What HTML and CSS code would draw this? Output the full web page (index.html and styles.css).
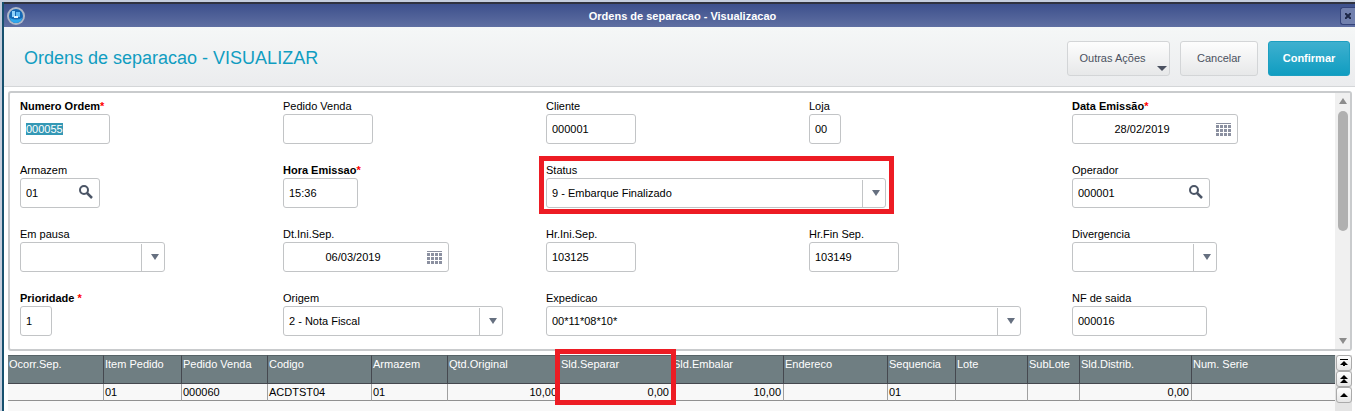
FILE: index.html
```
<!DOCTYPE html>
<html lang="pt-BR">
<head>
    <meta charset="UTF-8">
    <title>Ordens de separacao - Visualizacao</title>
    <link rel="stylesheet" href="styles.css">
</head>
<body>
    <!-- shared icons -->
    <svg class="sprite" aria-hidden="true">
        <symbol id="lupa" viewBox="0 0 14 14">
            <circle cx="5" cy="5" r="4" fill="none" stroke="#4b5566" stroke-width="2"/>
            <path d="M8 8l5 5" stroke="#4b5566" stroke-width="2.5"/>
        </symbol>
        <symbol id="calendario" viewBox="0 0 15 13">
            <path d="M0 .5h15" stroke="#8b90a0" stroke-width="1"/>
            <path d="M0 3.5h15M0 7.5h15M0 11.5h15" stroke="#8b90a0" stroke-width="3" stroke-dasharray="3 1"/>
        </symbol>
        <symbol id="seta" viewBox="0 0 8 6">
            <path d="M0 0h8L4 6z" fill="#667080"/>
        </symbol>
    </svg>

    <div class="window">
        <div class="titlebar">
            <svg class="logo" viewBox="0 0 18 18">
                <circle cx="9" cy="9" r="9" fill="#aeb8c8"/>
                <circle cx="9" cy="9" r="7" fill="#1468b4"/>
                <path d="M3 11a6 5 0 0 0 12 0a9 6 0 0 1-12 0z" fill="#30a8ec"/>
                <path d="M5 4h3v6H5z" fill="#8fd2fa"/>
                <path d="M9 5h4v5H9z" fill="#5db8f3"/>
                <path d="M7 9h4v2H7z" fill="#e6f6ff"/>
            </svg>
            <span class="caption">Ordens de separacao - Visualizacao</span>
            <button type="button" class="close" aria-label="Fechar">
                <svg width="6" height="6" viewBox="0 0 6 6"><path d="M0 0l6 6M6 0L0 6" stroke="#1d2748" stroke-width="2"/></svg>
            </button>
        </div>

        <div class="header">
            <h1>Ordens de separacao - VISUALIZAR</h1>
            <button type="button" class="btn btn-menu">Outras Ações
                <svg width="10" height="5" viewBox="0 0 10 5"><path d="M0 0h10L5 5z" fill="#4b5160"/></svg>
            </button>
            <button type="button" class="btn btn-cancel">Cancelar</button>
            <button type="button" class="btn btn-primary">Confirmar</button>
        </div>

        <div class="panel">
            <form class="fields">
                <div class="field required">
                    <label for="numero">Numero Ordem<i>*</i></label>
                    <input type="text" id="numero" class="w90" value="000055">
                </div>
                <div class="field">
                    <label for="pedido">Pedido Venda</label>
                    <input type="text" id="pedido" class="w90">
                </div>
                <div class="field">
                    <label for="cliente">Cliente</label>
                    <input type="text" id="cliente" class="w90" value="000001">
                </div>
                <div class="field">
                    <label for="loja">Loja</label>
                    <input type="text" id="loja" class="w32" value="00">
                </div>
                <div class="field required">
                    <label for="emissao">Data Emissão<i>*</i></label>
                    <div class="control date">
                        <input type="text" id="emissao" value="28/02/2019">
                        <svg><use href="#calendario"/></svg>
                    </div>
                </div>

                <div class="field">
                    <label for="armazem">Armazem</label>
                    <div class="control search w80">
                        <input type="text" id="armazem" value="01">
                        <svg><use href="#lupa"/></svg>
                    </div>
                </div>
                <div class="field required">
                    <label for="hora">Hora Emissao<i>*</i></label>
                    <input type="text" id="hora" class="w75" value="15:36">
                </div>
                <div class="field wide marked">
                    <label for="status">Status</label>
                    <div class="control combo w340">
                        <select id="status"><option>9 - Embarque Finalizado</option></select>
                        <svg><use href="#seta"/></svg>
                    </div>
                </div>
                <div class="field">
                    <label for="operador">Operador</label>
                    <div class="control search w138">
                        <input type="text" id="operador" value="000001">
                        <svg><use href="#lupa"/></svg>
                    </div>
                </div>

                <div class="field">
                    <label for="pausa">Em pausa</label>
                    <div class="control combo w145">
                        <select id="pausa"><option></option></select>
                        <svg><use href="#seta"/></svg>
                    </div>
                </div>
                <div class="field">
                    <label for="dtini">Dt.Ini.Sep.</label>
                    <div class="control date">
                        <input type="text" id="dtini" value="06/03/2019">
                        <svg><use href="#calendario"/></svg>
                    </div>
                </div>
                <div class="field">
                    <label for="hrini">Hr.Ini.Sep.</label>
                    <input type="text" id="hrini" class="w90" value="103125">
                </div>
                <div class="field">
                    <label for="hrfin">Hr.Fin Sep.</label>
                    <input type="text" id="hrfin" class="w90" value="103149">
                </div>
                <div class="field">
                    <label for="diverg">Divergencia</label>
                    <div class="control combo w145">
                        <select id="diverg"><option></option></select>
                        <svg><use href="#seta"/></svg>
                    </div>
                </div>

                <div class="field required">
                    <label for="prioridade">Prioridade <i>*</i></label>
                    <input type="text" id="prioridade" class="w32" value="1">
                </div>
                <div class="field">
                    <label for="origem">Origem</label>
                    <div class="control combo w220">
                        <select id="origem"><option>2 - Nota Fiscal</option></select>
                        <svg><use href="#seta"/></svg>
                    </div>
                </div>
                <div class="field wide">
                    <label for="expedicao">Expedicao</label>
                    <div class="control combo w475">
                        <select id="expedicao"><option>00*11*08*10*</option></select>
                        <svg><use href="#seta"/></svg>
                    </div>
                </div>
                <div class="field">
                    <label for="nf">NF de saida</label>
                    <input type="text" id="nf" class="w135" value="000016">
                </div>
            </form>
            <div class="scrollbar">
                <svg width="8" height="6" viewBox="0 0 8 6"><path d="M0 6h8L4 0z" fill="#8c8c8c"/></svg>
                <div class="thumb"></div>
                <svg width="8" height="6" viewBox="0 0 8 6"><path d="M0 0h8L4 6z" fill="#8c8c8c"/></svg>
            </div>
        </div>

        <div class="items">
            <table>
                <colgroup>
                    <col class="c96"><col class="c78"><col class="c86"><col class="c104"><col class="c76">
                    <col class="c112"><col class="c112"><col class="c112"><col class="c104"><col class="c68">
                    <col class="c72"><col class="c52"><col class="c112"><col>
                </colgroup>
                <thead>
                    <tr>
                        <th>Ocorr.Sep.</th>
                        <th>Item Pedido</th>
                        <th>Pedido Venda</th>
                        <th>Codigo</th>
                        <th>Armazem</th>
                        <th>Qtd.Original</th>
                        <th class="marked-col">Sld.Separar</th>
                        <th>Sld.Embalar</th>
                        <th>Endereco</th>
                        <th>Sequencia</th>
                        <th>Lote</th>
                        <th>SubLote</th>
                        <th>Sld.Distrib.</th>
                        <th>Num. Serie</th>
                    </tr>
                </thead>
                <tbody>
                    <tr>
                        <td></td>
                        <td>01</td>
                        <td>000060</td>
                        <td>ACDTST04</td>
                        <td>01</td>
                        <td class="num">10,00</td>
                        <td class="num">0,00</td>
                        <td class="num">10,00</td>
                        <td></td>
                        <td>01</td>
                        <td></td>
                        <td></td>
                        <td class="num">0,00</td>
                        <td></td>
                    </tr>
                </tbody>
            </table>
            <div class="nav">
                <button type="button" aria-label="Primeiro"><svg viewBox="0 0 8 8"><path d="M0 0h8v1H0zM4 2l4 4H0zM3 6h2v1H3z"/></svg></button>
                <button type="button" aria-label="Pagina anterior"><svg viewBox="0 0 8 8"><path d="M4 0l4 4H0zM4 4l4 4H0z"/></svg></button>
                <button type="button" aria-label="Anterior"><svg viewBox="0 0 8 8"><path d="M4 2l4 4H0z"/></svg></button>
            </div>
        </div>
    </div>

    <script>
        const numero = document.getElementById('numero');
        numero.focus();
        numero.select();
    </script>
</body>
</html>
```
FILE: styles.css
```
*, *::before, *::after {
    box-sizing: border-box;
}
html {
    background: #fff;
}
body {
    margin: 0;
    padding: 2px 0 0 2px;
    background: #c5cedd;
    font-family: "Liberation Sans", Arial, sans-serif;
    font-size: 11px;
    color: #000;
}
input, select, button {
    font-family: inherit;
    font-size: 11px;
    color: #000;
    margin: 0;
}
.sprite {
    display: none;
}
.window {
    border-left: 2px solid #16506e;
    background: #fff;
}

/* title bar */
.titlebar {
    display: flex;
    align-items: center;
    height: 25px;
    border-top: 2px solid #30333f;
    background: linear-gradient(#3d508c, #5f6fa2);
    color: #fff;
    font-weight: bold;
}
.logo {
    width: 18px;
    height: 18px;
    margin-left: 3px;
}
.caption {
    flex: 1;
    text-align: center;
}
.close {
    display: flex;
    align-items: center;
    justify-content: center;
    width: 15px;
    height: 18px;
    padding: 0;
    border: 1px solid #34437a;
    border-right: none;
    border-radius: 3px 0 0 3px;
    background: #7180ae;
}

/* header */
.header {
    display: flex;
    align-items: center;
    gap: 10px;
    height: 60px;
    padding: 3px 5px 0 20px;
    border-bottom: 1px solid #d4d6d8;
    background: linear-gradient(#f5f7f7, #ebecee);
}
h1 {
    flex: 1;
    margin: 0;
    font-size: 18px;
    font-weight: normal;
    color: #109dc1;
}
.btn {
    height: 35px;
    padding: 0;
    border: 1px solid #d3d5d7;
    border-radius: 3px;
    background: linear-gradient(#fdfdfd, #e7e8e9);
    color: #4b5160;
}
.btn-menu {
    position: relative;
    width: 103px;
    padding-right: 12px;
}
.btn-menu svg {
    position: absolute;
    right: 2px;
    bottom: 4px;
}
.btn-cancel {
    width: 78px;
}
.btn-primary {
    width: 82px;
    border-color: #1c9fc1;
    background: linear-gradient(#3eb0cf, #109dc1);
    color: #fff;
    font-weight: bold;
}

/* form */
.panel {
    display: flex;
    margin: 4px 3px 0 4px;
    border: 2px solid #c9cbcd;
    border-radius: 3px;
}
.fields {
    flex: 1;
    display: grid;
    grid-template-columns: repeat(5, 1fr);
    row-gap: 19px;
    padding: 6px 0 13px 10px;
}
.field {
    display: flex;
    flex-direction: column;
    align-items: flex-start;
    min-width: 0;
}
.wide {
    grid-column: span 2;
}
label {
    height: 15px;
    line-height: 15px;
}
.required label {
    font-weight: bold;
}
label i {
    font-style: normal;
    color: #f00;
}
input, select {
    height: 30px;
    padding: 0 5px;
    border: 1px solid #c2c4c6;
    border-radius: 3px;
    background: #fff;
    outline: none;
    line-height: 15px;
}
input::selection {
    background: #3498b5;
    color: #fff;
}
.control {
    position: relative;
}
.control input, .control select {
    width: 100%;
    appearance: none;
}
.control svg {
    position: absolute;
    pointer-events: none;
}
.date {
    width: 166px;
}
.date input {
    padding-right: 31px;
    text-align: center;
}
.date svg {
    top: 9px;
    right: 7px;
    width: 15px;
    height: 13px;
}
.search svg {
    top: 7px;
    right: 7px;
    width: 14px;
    height: 14px;
}
.combo svg {
    top: 12px;
    right: 6px;
    width: 8px;
    height: 6px;
}
.combo::after {
    content: "";
    position: absolute;
    top: 2px;
    right: 23px;
    bottom: 1px;
    border-left: 1px solid #c2c4c6;
}
.w32 { width: 32px; }
.w75 { width: 75px; }
.w80 { width: 80px; }
.w90 { width: 90px; }
.w135 { width: 135px; }
.w138 { width: 138px; }
.w145 { width: 145px; }
.w220 { width: 220px; }
.w340 { width: 340px; }
.w475 { width: 475px; }

/* red callouts */
.marked {
    position: relative;
}
.marked::after {
    content: "";
    position: absolute;
    top: -7px;
    left: -7px;
    width: 355px;
    height: 58px;
    border: 5px solid #ed1c24;
}
.marked-col::after {
    content: "";
    position: absolute;
    z-index: 1;
    top: -7px;
    left: -5px;
    width: 121px;
    height: 56px;
    border: 5px solid #ed1c24;
}

.scrollbar {
    display: flex;
    flex-direction: column;
    align-items: center;
    width: 15px;
    padding: 5px 0;
    background: #f0f0f0;
}
.thumb {
    width: 10px;
    height: 120px;
    margin: 7px 0 auto;
    border-radius: 5px;
    background: #b0b0b0;
}

/* items grid */
.items {
    display: flex;
    align-items: flex-start;
    height: 56px;
    margin: 4px 3px 0 4px;
    background: #f8f8f8;
}
table {
    flex: 1;
    width: 0;
    table-layout: fixed;
    border-collapse: separate;
    border-spacing: 0;
}
th, td {
    padding: 0 2px 0 1px;
    border-right: 1px solid #a0a0a0;
    text-align: left;
    font-weight: normal;
    white-space: nowrap;
}
th {
    position: relative;
    height: 29px;
    padding-top: 1px;
    border-top: 1px solid #566367;
    border-bottom: 1px solid #45484f;
    border-right-color: #45484f;
    background: #6f7e82;
    color: #fff;
    vertical-align: top;
    line-height: 15px;
}
td {
    height: 17px;
    border-bottom: 1px solid #909090;
    line-height: 16px;
}
th:last-child, td:last-child {
    border-right: none;
}
.num {
    text-align: right;
}
.c52 { width: 52px; }
.c68 { width: 68px; }
.c72 { width: 72px; }
.c76 { width: 76px; }
.c78 { width: 78px; }
.c86 { width: 86px; }
.c96 { width: 96px; }
.c104 { width: 104px; }
.c112 { width: 112px; }
.nav {
    align-self: stretch;
    width: 17px;
    padding-left: 1px;
    background: #e4e4e4;
}
.nav button {
    display: flex;
    align-items: center;
    justify-content: center;
    width: 16px;
    height: 16px;
    padding: 0;
    border: 1px solid #aaa;
    border-radius: 3px;
    background: linear-gradient(#fff, #e6e6e6);
}
.nav svg {
    width: 8px;
    height: 8px;
}
```
